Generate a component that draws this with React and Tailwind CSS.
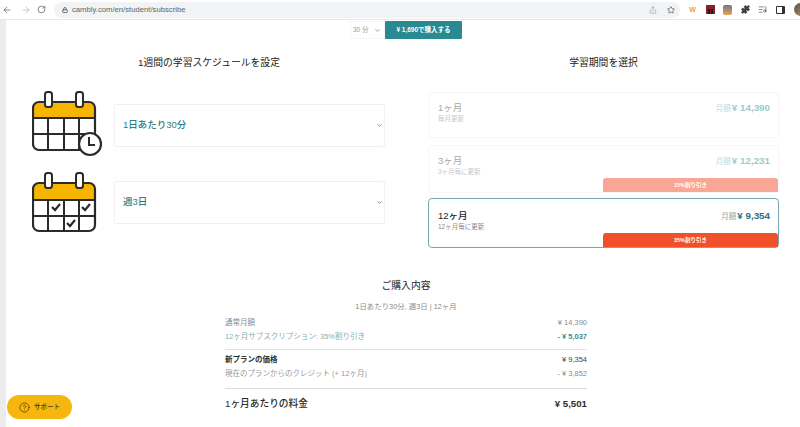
import { ArrowLeft, ArrowRight, RotateCw, Lock, Share, Star, Puzzle, ListMusic, ChevronDown, HelpCircle } from 'lucide-react';

const CalendarBase = ({ header, middle, children }) => (
  <>
    <path d={`M1 18 a5 5 0 0 1 5-5 H58 a5 5 0 0 1 5 5 V${header} H1 Z`} fill="#f5b500" />
    <rect x="1" y="13" width="62" height="48" rx="6" fill="none" stroke="#2b2b2b" strokeWidth="2.2" />
    <path d={`M1 ${header} H63 M1 ${middle} H63 M16 ${header} V61 M32 ${header} V61 M47 ${header} V61`} stroke="#2b2b2b" strokeWidth="2" fill="none" />
    <rect x="13" y="3" width="7" height="15" rx="2.5" fill="#fff" stroke="#2b2b2b" strokeWidth="2" />
    <rect x="44" y="3" width="7" height="15" rx="2.5" fill="#fff" stroke="#2b2b2b" strokeWidth="2" />
    {children}
  </>
);

const ClockCalendar = () => (
  <svg width="74" height="72" viewBox="0 0 74 72" className="block">
    <CalendarBase header={29} middle={45}>
      <circle cx="58" cy="55" r="11" fill="#fff" stroke="#2b2b2b" strokeWidth="2.2" />
      <path d="M57 48 V56 H63" fill="none" stroke="#2b2b2b" strokeWidth="2" />
    </CalendarBase>
  </svg>
);

const CheckCalendar = () => (
  <svg width="74" height="72" viewBox="0 0 74 72" className="block">
    <g transform="translate(0 4)">
      <CalendarBase header={30} middle={46}>
        <path d="M20 37 l3 3 l5-6 M50 37 l3 3 l5-6 M35 53 l3 3 l5-6" fill="none" stroke="#2b2b2b" strokeWidth="2.2" />
      </CalendarBase>
    </g>
  </svg>
);

const Toolbar = () => (
  <div className="flex h-[20px] items-center border-b border-[#e8e8e8] bg-white pl-[2px] text-[#5f6368]">
    <div className="flex w-[52px] shrink-0 items-center">
      <ArrowLeft size={10} strokeWidth={1.8} />
      <ArrowRight size={10} strokeWidth={1.8} className="ml-[9px] text-[#b5b8bb]" />
      <RotateCw size={9} strokeWidth={2} className="ml-[6px]" />
    </div>
    <div className="flex h-[16px] w-[626px] shrink-0 items-center rounded-full bg-[#f1f3f4] pl-[8px] pr-[5px]">
      <Lock size={6} strokeWidth={3} className="text-[#4a4d50]" />
      <span className="ml-[4px] text-[7.7px] text-[#5f6368]">cambly.com/en/student/subscribe</span>
      <Share size={8} className="ml-auto text-[#9aa0a6]" />
      <Star size={8} strokeWidth={2} className="ml-[10px] text-[#4a4d50]" />
    </div>
    <div className="ml-[8px] flex shrink-0 items-center gap-[8.6px]">
      <span className="w-[9px] shrink-0 text-center text-[7px] font-bold leading-none text-[#f0a030]">W</span>
      <span className="flex h-[9px] w-[9px] shrink-0 items-end justify-center gap-[1px] bg-[#8c1f24]">
        <span className="h-[5px] w-[2px] bg-[#1d1d1d]" />
        <span className="h-[5px] w-[2px] bg-[#1d1d1d]" />
      </span>
      <span className="h-[10px] w-[9px] shrink-0 rounded-[2px] bg-gradient-to-b from-[#6b7a80] to-[#e8a050]" />
      <Puzzle size={9} strokeWidth={2.5} fill="#3c4043" className="shrink-0 text-[#3c4043]" />
      <ListMusic size={9} strokeWidth={1.6} className="shrink-0 text-[#3c4043]" />
      <span className="h-[8px] w-[9px] shrink-0 rounded-[1px] border border-r-[3px] border-[#2f3133]" />
      <span className="h-[13px] w-[13px] shrink-0 rounded-full bg-gradient-to-br from-[#5b5344] to-[#b0986c]" />
    </div>
  </div>
);

const ScheduleRow = ({ icon, label, className }) => (
  <div className={`flex items-center ${className}`}>
    <div className="w-[82px] shrink-0">{icon}</div>
    <div className="flex h-[43px] w-[271px] items-center justify-between rounded-[2px] border border-[#f0f0f0] pl-[8px] pr-[1px] text-[#2f7c86]">
      <span className="text-[9.5px] font-medium">{label}</span>
      <ChevronDown size={7} strokeWidth={2.5} />
    </div>
  </div>
);

const PlanCard = ({ title, sub, price, discount, selected, className }) => (
  <div className={`relative w-[351px] rounded-[4px] pl-[9px] pr-[8px] ${selected ? 'h-[50px] border border-[#7ba6ac]' : 'border border-[#f6f6f6]'} ${className}`}>
    <div className={`flex items-start justify-between ${selected ? 'pt-[10px]' : 'pt-[8px]'}`}>
      <div>
        <div className={`text-[9.5px] leading-[14px] ${selected ? 'font-medium text-[#222]' : 'text-[#a8a8a8]'}`}>{title}</div>
        <div className={`text-[6.5px] leading-[8px] ${selected ? 'text-[#8a8a8a]' : 'text-[#c8c8c8]'}`}>{sub}</div>
      </div>
      <div className="flex items-baseline gap-[1px] leading-[14px]">
        <span className={`text-[7.5px] ${selected ? 'text-[#8fa5a8]' : 'text-[#bcdadd]'}`}>月額</span>
        <span className={`text-[9.8px] font-bold ${selected ? 'text-[#2d6f78]' : 'text-[#9ccacf]'}`}>{price}</span>
      </div>
    </div>
    {discount && (
      <div className={`absolute bottom-0 right-0 flex h-[14px] w-[175px] items-center justify-center rounded-t-[3px] text-[5.5px] font-bold text-white ${selected ? 'bg-[#f0502a]' : 'bg-[#f8a696]'}`}>
        {discount}
      </div>
    )}
  </div>
);

const SummaryRow = ({ left, right, leftClass, rightClass }) => (
  <div className="flex h-[14px] items-center justify-between text-[7.5px]">
    <span className={leftClass}>{left}</span>
    <span className={rightClass}>{right}</span>
  </div>
);

const App = () => (
  <div
    className="relative h-[427px] w-[800px] overflow-hidden bg-white"
    style={{ fontFamily: '"Liberation Sans", "Noto Sans CJK JP", sans-serif' }}
  >
    <Toolbar />
    <div className="flex h-[407px]">
      <div className="w-[6px] shrink-0 bg-[#ececec]" />
      <div className="flex-1">
        <div className="flex h-[19px] items-center pl-[344px] pt-[1px]">
          <div className="flex h-[18px] w-[35px] items-center justify-between border border-[#f6f6f6] pl-[2px] pr-[3px] text-[6.5px] text-[#999]">
            <span>30 分</span>
            <ChevronDown size={7} strokeWidth={2.5} className="text-[#777]" />
          </div>
          <div className="flex h-[18px] w-[77px] items-center justify-center rounded-[1px] bg-[#2a8a92] text-[6.5px] font-bold text-white">
            ¥ 1,690で購入する
          </div>
        </div>

        <div className="flex">
          <div className="w-[422px] shrink-0">
            <h2 className="mt-[17px] w-[406px] text-center text-[9.8px] leading-[14px] text-[#222]">1週間の学習スケジュールを設定</h2>
            <ScheduleRow icon={<ClockCalendar />} label="1日あたり30分" className="ml-[26px] mt-[19px]" />
            <ScheduleRow icon={<CheckCalendar />} label="週3日" className="ml-[26px] mt-[5px]" />
          </div>
          <div>
            <h2 className="mt-[17px] w-[351px] text-center text-[9.8px] leading-[14px] text-[#222]">学習期間を選択</h2>
            <PlanCard className="mt-[22px] h-[46px]" title="1ヶ月" sub="毎月更新" price="¥ 14,390" />
            <PlanCard className="mt-[7px] h-[48px]" title="3ヶ月" sub="3ヶ月毎に更新" price="¥ 12,231" discount="15%割り引き" />
            <PlanCard className="mt-[5px]" selected title="12ヶ月" sub="12ヶ月毎に更新" price="¥ 9,354" discount="35%割り引き" />
          </div>
        </div>

        <div className="ml-[219px] mt-[31px] w-[362px]">
          <h2 className="text-center text-[9.8px] leading-[14px] text-[#222]">ご購入内容</h2>
          <div className="mt-[8px] text-center text-[7.4px] leading-[12px] text-[#8a8a8a]">1日あたり30分, 週3日 | 12ヶ月</div>
          <div className="mt-[3px]">
            <SummaryRow left="通常月額" right="¥ 14,390" leftClass="text-[#8a8a8a]" rightClass="text-[#8a8a8a]" />
            <SummaryRow left="12ヶ月サブスクリプション: 35%割り引き" right="- ¥ 5,037" leftClass="text-[#7fb0b5]" rightClass="font-bold text-[#3f8a92]" />
          </div>
          <div className="mb-[3px] mt-[5px] border-t border-[#e2e2e2]" />
          <SummaryRow left="新プランの価格" right="¥ 9,354" leftClass="font-bold text-[#333]" rightClass="text-[#444]" />
          <SummaryRow left="現在のプランからのクレジット (+ 12ヶ月)" right="- ¥ 3,852" leftClass="text-[#999]" rightClass="text-[#8a8a8a]" />
          <div className="mt-[7px] border-t border-[#dcdcdc]" />
          <div className="mt-[8px] flex items-center justify-between text-[9.7px] font-medium leading-[14px] text-[#2b2b2b]">
            <span>1ヶ月あたりの料金</span>
            <span className="text-[9.7px] font-bold">¥ 5,501</span>
          </div>
        </div>
      </div>
    </div>

    <div className="absolute bottom-[8px] left-[7px] flex h-[24px] w-[65px] items-center gap-[4px] rounded-full bg-[#f6b60d] pl-[12px] text-[#4a3a10]">
      <HelpCircle size={11} strokeWidth={1.6} />
      <span className="text-[6.5px] font-medium">サポート</span>
    </div>
  </div>
);

export default App;
